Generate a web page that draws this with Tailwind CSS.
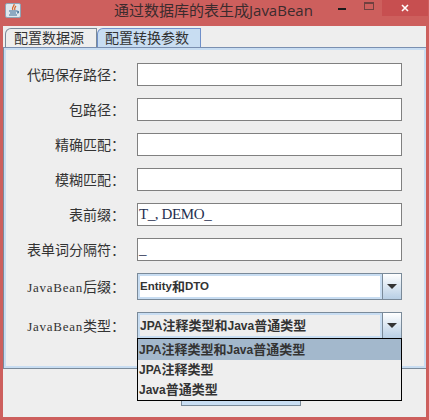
<!DOCTYPE html>
<html lang="zh">
  <head>
    <meta charset="UTF-8" />
    <meta name="viewport" content="width=device-width, initial-scale=1.0" />
    <title>通过数据库的表生成JavaBean</title>
    <script src="https://cdn.jsdelivr.net/npm/@tailwindcss/browser@4"></script>
  </head>
  <body class="h-[420px] w-[429px] overflow-hidden bg-[#cd5f5d] font-['Noto_Sans_CJK_SC',sans-serif]">
    <!-- title bar -->
    <div class="flex h-[26px] items-center">
      <div class="ml-[5px] mt-[-6px] flex h-[15px] w-[16px] items-center justify-center rounded-[2px] border border-[#8fa3b5] bg-[#dfe7ee]">
        <svg width="13" height="13" viewBox="0 0 13 13">
          <path d="M7 0c1 2-3 3-1 6M9 2c-1 1-2 2-1 4" fill="none" stroke="#d9652b" stroke-width="1.2" />
          <path d="M2 7h8c2 0 2 2 0 2M3 9h6M2 11h8" fill="none" stroke="#3f6d96" stroke-width="1.2" />
        </svg>
      </div>
      <div class="ml-[93px] mt-[-6px] w-[205px] whitespace-nowrap text-[15px] leading-[26px] text-[#3b2b2d]">通过数据库的表生成<span class="font-['Open_Sans']">JavaBean</span></div>
      <div class="ml-[19px] mt-[-8px] h-[2px] w-[8px] bg-[#1b1b1b]"></div>
      <div class="ml-[18px] mt-[-14px] h-[8px] w-[10px] border border-t-2 border-[#70403f]"></div>
      <div class="ml-[8px] mt-[-10px] flex h-[16px] w-[46px] items-center justify-center bg-[#c74f50]">
        <svg width="8" height="8" viewBox="0 0 8 8"><path d="M1 1l6 6M7 1l-6 6" stroke="#fff" stroke-width="1.6" /></svg>
      </div>
    </div>

    <!-- content -->
    <div class="relative ml-[3px] h-[391px] w-[423px] overflow-hidden bg-[#eeeeee]">
      <div class="flex h-[21px] items-end pl-[2px]">
        <div class="flex h-[19px] w-[92px] items-center rounded-tl-[6px] border-x border-t border-[#7a8a99] bg-[#eeeeee] pb-[2px] pl-[8px] text-[14px] leading-none text-[#333333]">配置数据源</div>
        <div class="flex h-[19px] w-[104px] items-center rounded-tl-[6px] border-x border-t border-[#6f8fc9] bg-[#c8ddf2] pb-[2px] pl-[7px] text-[14px] leading-none text-[#333333]">配置转换参数</div>
      </div>

      <!-- tab pane, its right edge is cut off by the window -->
      <div class="h-[322px] w-[424px] border border-x-[#7a8a99] border-t-[#7a8fb0] border-b-[#7a8a99] bg-[#c8ddf2] p-[2px]">
        <div class="flex h-[316px] flex-col gap-[12px] bg-[#eeeeee] pl-[20px] pt-[13px]">
          <div class="flex flex-col gap-[12px]">
            <div class="flex h-[23px] items-center gap-[12px]">
              <span class="w-[99px] text-right text-[14px] whitespace-nowrap text-[#333333]">代码保存路径：</span>
              <div class="h-[23px] w-[265px] border border-[#808080] bg-white"></div>
            </div>
            <div class="flex h-[23px] items-center gap-[12px]">
              <span class="w-[99px] text-right text-[14px] whitespace-nowrap text-[#333333]">包路径：</span>
              <div class="h-[23px] w-[265px] border border-[#808080] bg-white"></div>
            </div>
            <div class="flex h-[23px] items-center gap-[12px]">
              <span class="w-[99px] text-right text-[14px] whitespace-nowrap text-[#333333]">精确匹配：</span>
              <div class="h-[23px] w-[265px] border border-[#808080] bg-white"></div>
            </div>
            <div class="flex h-[23px] items-center gap-[12px]">
              <span class="w-[99px] text-right text-[14px] whitespace-nowrap text-[#333333]">模糊匹配：</span>
              <div class="h-[23px] w-[265px] border border-[#808080] bg-white"></div>
            </div>
            <div class="flex h-[23px] items-center gap-[12px]">
              <span class="w-[99px] text-right text-[14px] whitespace-nowrap text-[#333333]">表前缀：</span>
              <div class="flex h-[23px] w-[265px] items-center border border-[#808080] bg-white pl-[1px] font-['Liberation_Serif'] text-[15px] tracking-[-0.4px] text-[#1f3050]">T_, DEMO_</div>
            </div>
            <div class="flex h-[23px] items-center gap-[12px]">
              <span class="w-[99px] text-right text-[14px] whitespace-nowrap text-[#333333]">表单词分隔符：</span>
              <div class="flex h-[23px] w-[265px] items-center border border-[#808080] bg-white pl-[1px] font-['Liberation_Serif'] text-[15px] text-[#1f3050]">_</div>
            </div>
          </div>

          <div class="flex h-[27px] items-center gap-[12px]">
            <span class="w-[99px] text-right text-[14px] whitespace-nowrap text-[#333333]"><span class="font-['Liberation_Serif'] text-[13px] tracking-[0.75px]">JavaBean</span>后缀：</span>
            <div class="flex h-[27px] w-[265px] border border-[#7a8a99] bg-white">
              <div class="flex flex-1 items-center border-2 border-[#c8ddf2] font-['Liberation_Sans','Noto_Sans_CJK_SC',sans-serif] text-[11.5px] font-bold text-[#333333]">Entity<span class="text-[13px]">和</span>DTO</div>
              <div class="flex w-[19px] items-center justify-center border-l border-[#7a8a99] bg-linear-to-b from-white to-[#b8cfe5]">
                <svg width="10" height="5" viewBox="0 0 10 5"><path d="M0 0h10L5 5z" fill="#333333" /></svg>
              </div>
            </div>
          </div>
          <div class="flex h-[27px] items-center gap-[12px]">
            <span class="w-[99px] text-right text-[14px] whitespace-nowrap text-[#333333]"><span class="font-['Liberation_Serif'] text-[13px] tracking-[0.75px]">JavaBean</span>类型：</span>
            <div class="flex h-[27px] w-[265px] border border-[#7a8a99] bg-[#eeeeee]">
              <div class="flex flex-1 items-center border-2 border-[#c8ddf2] font-['Liberation_Sans','Noto_Sans_CJK_SC',sans-serif] text-[12px] font-bold text-[#333333]">JPA<span class="text-[13px]">注释类型和</span>Java<span class="text-[13px]">普通类型</span></div>
              <div class="flex w-[19px] items-center justify-center border-l border-[#7a8a99] bg-linear-to-b from-white to-[#b8cfe5]">
                <svg width="10" height="5" viewBox="0 0 10 5"><path d="M0 0h10L5 5z" fill="#333333" /></svg>
              </div>
            </div>
          </div>
        </div>
      </div>

      <!-- button, mostly behind the open list -->
      <div class="ml-[178px] mt-[17px] h-[20px] w-[120px] border border-[#7a8a99] bg-[#c8ddf2]"></div>

      <!-- open combo list -->
      <div class="absolute left-[134px] top-[312px] flex h-[63px] w-[265px] flex-col border border-black bg-[#eeeeee] font-['Liberation_Sans','Noto_Sans_CJK_SC',sans-serif] text-[12px] font-bold text-[#333333]">
        <div class="flex h-[21px] items-center bg-[#a3b8cc] pl-[1px]">JPA<span class="text-[13px]">注释类型和</span>Java<span class="text-[13px]">普通类型</span></div>
        <div class="flex h-[20px] items-center pl-[1px]">JPA<span class="text-[13px]">注释类型</span></div>
        <div class="flex h-[20px] items-center pl-[1px]">Java<span class="text-[13px]">普通类型</span></div>
      </div>
    </div>
  </body>
</html>
